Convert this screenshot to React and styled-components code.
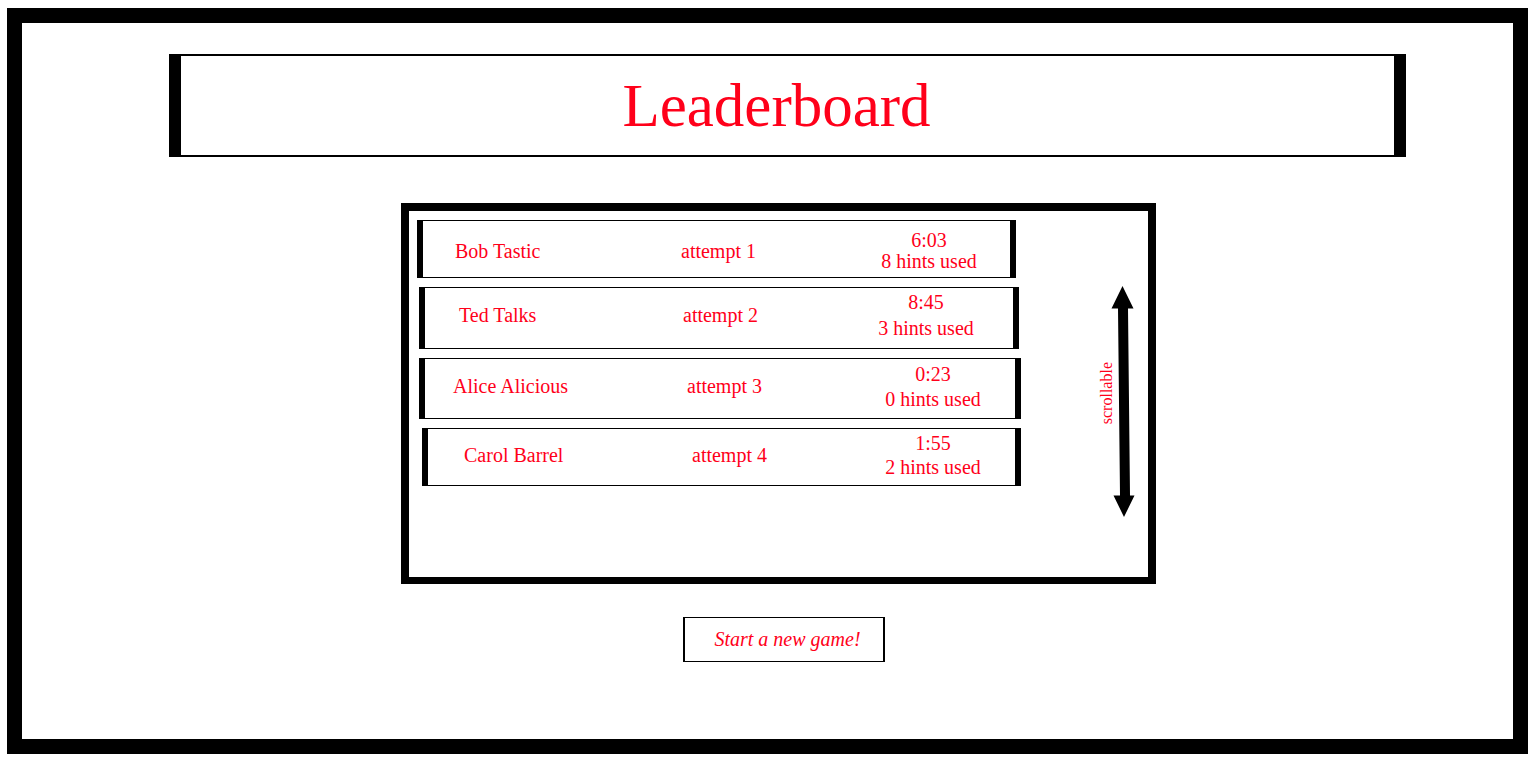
import React from "react";
import styled, { createGlobalStyle } from "styled-components";

const red = "#ff001a";

const GlobalStyle = createGlobalStyle`
  * { box-sizing: border-box; }
  body {
    margin: 0;
    background: #fff;
    color: ${red};
    font-family: "Liberation Serif", "Times New Roman", serif;
    font-size: 20px;
  }
`;

const Page = styled.div`
  min-height: 100vh;
  padding: 8px 7px 4px;
  display: flex;
`;

const Frame = styled.main`
  flex: 1;
  border: 15px solid #000;
  padding: 31px 0 32px;
`;

const TitleRow = styled.header`
  display: grid;
  grid-template-columns: 147fr 1237fr 107fr;
`;

const TitleBox = styled.div`
  grid-column: 2;
  height: 103px;
  border: solid #000;
  border-width: 2px 12px;
  padding-right: 22px;
  display: flex;
  align-items: center;
  justify-content: center;
`;

const Title = styled.h1`
  margin: 0;
  font-size: 61px;
  font-weight: 400;
  line-height: 64px;
`;

const Content = styled.section`
  display: grid;
  grid-template-columns: 379fr 755fr 357fr;
  row-gap: 33px;
  padding-top: 46px;
`;

const Panel = styled.div`
  grid-column: 2;
  min-height: 381px;
  border: solid #000;
  border-width: 8px 8px 7px;
  padding-top: 9px;
  display: grid;
  grid-template-columns: 612fr 127fr;
  align-items: start;
`;

const List = styled.ol`
  margin: 0;
  padding: 0;
  list-style: none;
  display: flex;
  flex-direction: column;
  gap: 9px;
`;

const Row = styled.li`
  display: grid;
  grid-template-columns: ${(p) => p.$first}px 1fr ${(p) => p.$last}px;
  align-items: center;
  height: ${(p) => p.$height}px;
  margin: 0 ${(p) => p.$right}px 0 ${(p) => p.$left}px;
  padding: ${(p) => p.$padding};
  border: solid #000;
  border-width: 1px 6px;
`;

const Name = styled.span`
  padding-left: ${(p) => p.$indent}px;
`;

const Attempt = styled.span``;

const Score = styled.div`
  display: flex;
  flex-direction: column;
  text-align: center;
  line-height: ${(p) => p.$lead}px;
`;

const ScrollHint = styled.div`
  display: flex;
  align-items: center;
  justify-content: flex-end;
  padding: 66px 13px 0 0;
`;

const ScrollLabel = styled.span`
  writing-mode: vertical-rl;
  transform: rotate(180deg);
  font-size: 16px;
  line-height: 20px;
  padding-top: 16px;
  margin-right: -6px;
`;

const StartButton = styled.button`
  grid-column: 2;
  justify-self: center;
  width: 202px;
  height: 45px;
  margin-left: 10px;
  padding: 0 0 0 8px;
  border: 2px solid #000;
  border-bottom-width: 1px;
  border-top: 1px solid #000;
  border-radius: 0;
  background: #fff;
  color: inherit;
  font: italic 20px "Liberation Serif", "Times New Roman", serif;
  cursor: pointer;
`;

const entries = [
  { name: "Bob Tastic", attempt: 1, time: "6:03", hints: 8, left: 8, right: 5, height: 58, first: 258, last: 162, indent: 32, lead: 21, padding: "4px 0 0" },
  { name: "Ted Talks", attempt: 2, time: "8:45", hints: 3, left: 10, right: 2, height: 62, first: 258, last: 174, indent: 34, lead: 26, padding: "0 0 6px" },
  { name: "Alice Alicious", attempt: 3, time: "0:23", hints: 0, left: 10, right: 0, height: 61, first: 262, last: 164, indent: 28, lead: 25, padding: "0 0 4px" },
  { name: "Carol Barrel", attempt: 4, time: "1:55", hints: 2, left: 13, right: 0, height: 58, first: 264, last: 164, indent: 36, lead: 24, padding: "0 0 4px" },
];

function ScrollArrow() {
  return (
    <svg width="24" height="231" viewBox="0 0 24 231" aria-hidden="true">
      <path d="M11.5 0 L22.5 22.5 H17 L19 209.5 H23.5 L13 231 L2.5 209.5 H9 L7 22.5 H0.5 Z" fill="#000" />
    </svg>
  );
}

export default function App() {
  return (
    <>
      <GlobalStyle />
      <Page>
        <Frame>
          <TitleRow>
            <TitleBox>
              <Title>Leaderboard</Title>
            </TitleBox>
          </TitleRow>
          <Content>
            <Panel>
              <List>
                {entries.map((e) => (
                  <Row
                    key={e.name}
                    $left={e.left}
                    $right={e.right}
                    $height={e.height}
                    $first={e.first}
                    $last={e.last}
                    $padding={e.padding}
                  >
                    <Name $indent={e.indent}>{e.name}</Name>
                    <Attempt>attempt {e.attempt}</Attempt>
                    <Score $lead={e.lead}>
                      <span>{e.time}</span>
                      <span>{e.hints} hints used</span>
                    </Score>
                  </Row>
                ))}
              </List>
              <ScrollHint>
                <ScrollLabel>scrollable</ScrollLabel>
                <ScrollArrow />
              </ScrollHint>
            </Panel>
            <StartButton type="button">Start a new game!</StartButton>
          </Content>
        </Frame>
      </Page>
    </>
  );
}
